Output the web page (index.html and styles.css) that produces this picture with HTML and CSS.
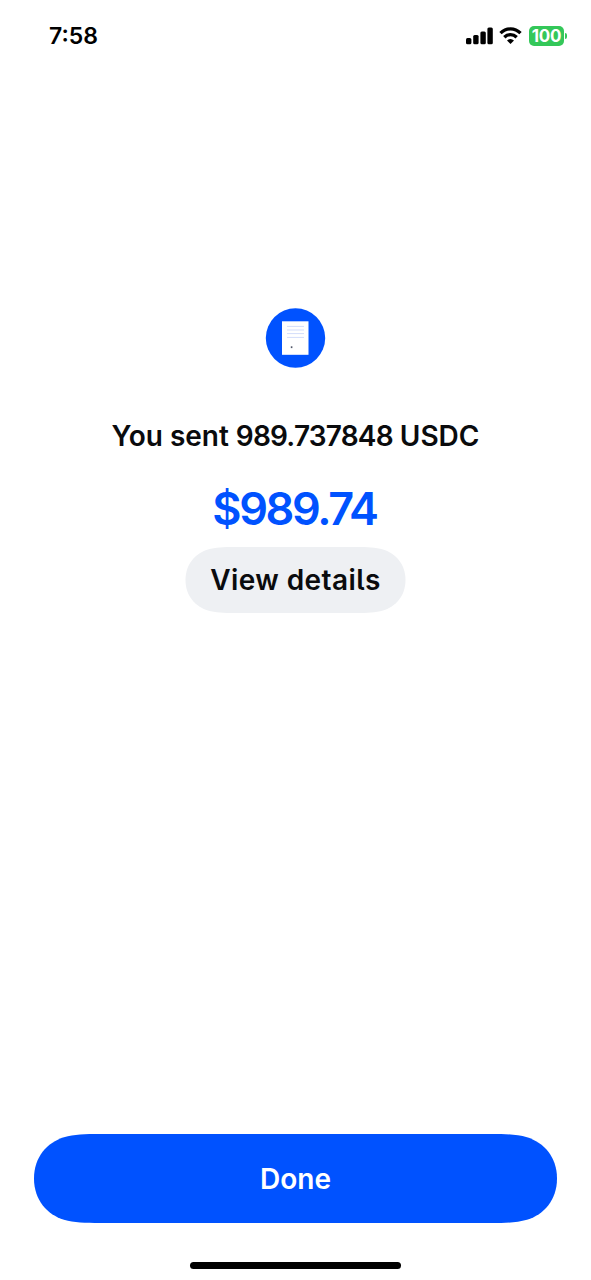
FILE: index.html
```html
<!DOCTYPE html>
<html lang="en">
<head>
<meta charset="utf-8">
<title>Transfer sent</title>
<link rel="stylesheet" href="styles.css">
</head>
<body>
<div class="screen">
  <header class="status">
    <span class="time">7:58</span>
    <div class="indicators">
      <svg class="signal" width="28" height="18" viewBox="0 0 28 18" aria-hidden="true">
        <rect x="0" y="11" width="5.4" height="6.2" rx="1.5"/>
        <rect x="7.2" y="8" width="5.4" height="9.2" rx="1.5"/>
        <rect x="14.4" y="4.6" width="5.4" height="12.6" rx="1.5"/>
        <rect x="21.4" y="0.6" width="5.4" height="16.6" rx="1.5"/>
      </svg>
      <svg class="wifi" width="24" height="18" viewBox="0 0 24 18" aria-hidden="true">
        <path class="wave" d="M1.5 6.2C7.2.4 15.8.4 21.5 6.2"/>
        <path class="wave" d="M5.3 10.3C8.9 6.8 14.1 6.8 17.7 10.3"/>
        <path d="M8 13.6Q11.5 10.5 15 13.6L11.5 17.1Z"/>
      </svg>
      <span class="battery">100</span><span class="tip"></span>
    </div>
  </header>
  <main class="receipt">
    <svg class="badge" width="61" height="60" viewBox="0 0 61 60" aria-hidden="true">
      <circle cx="30.5" cy="30" r="29.7" fill="#0052ff"/>
      <rect x="17" y="13.3" width="26.5" height="33.5" fill="#fff"/>
      <path d="M22 18.4H39M22 22H39M22 25.6H39M22 29.4H39" stroke="#d3ddfa" stroke-width="1"/>
      <rect x="25.8" y="38.3" width="1.6" height="1.8" fill="#525869"/>
    </svg>
    <h1 class="title">You sent <span class="figure">989.737848</span> USDC</h1>
    <p class="amount">$989.74</p>
    <button class="details"><svg class="shape" viewBox="0 0 220 66" aria-hidden="true"><path d="M0 33C0 17.500 9.500 6.500 22.500 2.500C30 .3 38 0 49 0H171C182 0 190 .3 197.500 2.500C210.500 6.500 220 17.500 220 33C220 48.500 210.500 59.500 197.500 63.500C190 65.700 182 66 171 66H49C38 66 30 65.700 22.500 63.500C9.500 59.500 0 48.500 0 33Z"/></svg><span class="label">View details</span></button>
  </main>
  <footer class="footer">
    <button class="done"><svg class="shape" viewBox="0 0 523 89" aria-hidden="true"><path d="M0 44.5C0 23 13 8.500 30 3.200C40 .4 51 0 66 0H457C472 0 483 .4 493 3.200C510 8.500 523 23 523 44.5C523 66 510 80.500 493 85.800C483 88.600 472 89 457 89H66C51 89 40 88.600 30 85.800C13 80.500 0 66 0 44.5Z"/></svg><span class="label">Done</span></button>
    <div class="home"></div>
  </footer>
</div>
</body>
</html>
```
FILE: styles.css
```css
* { box-sizing: border-box; }
body { margin: 0; background: #fff; }
.screen {
  width: 591px;
  height: 1280px;
  display: flex;
  flex-direction: column;
  font-family: Inter, "Liberation Sans", sans-serif;
  color: #0a0b0d;
}
.status {
  height: 72px;
  padding: 0 24px 0 49px;
  display: flex;
  align-items: center;
  justify-content: space-between;
}
.time { font-size: 23px; font-weight: 600; line-height: 28px; color: #000; }
.indicators { display: flex; align-items: center; }
.signal { margin-right: 5px; }
.wifi { margin-right: 6px; }
.wave { fill: none; stroke: #000; stroke-width: 3.3; }
.battery {
  width: 35px;
  height: 20px;
  border-radius: 5px;
  background: #34c759;
  color: #fff;
  font-size: 17px;
  font-weight: 700;
  line-height: 20px;
  letter-spacing: -0.3px;
  text-align: center;
}
.tip { width: 2px; height: 6px; margin-left: 1px; border-radius: 0 2px 2px 0; background: #34c759; }
.receipt {
  flex: 1;
  padding-top: 236px;
  display: flex;
  flex-direction: column;
  align-items: center;
}
.badge { display: block; }
.title { margin: 50px 0 0; font-size: 28px; font-weight: 600; line-height: 36px; letter-spacing: -0.03px; white-space: nowrap; }
.figure { letter-spacing: -0.8px; }
.amount { margin: 27px 0 0; font-size: 45px; font-weight: 600; line-height: 56px; letter-spacing: -2.4px; text-indent: -2px; color: #0052ff; }
.details, .done {
  border: 0;
  padding: 0;
  background: none;
  display: grid;
  place-items: center;
  font-family: inherit;
  font-size: 28px;
  font-weight: 600;
  line-height: 36px;
}
.shape, .label { grid-area: 1 / 1; }
.shape { width: 100%; height: 100%; display: block; }
.details { width: 221px; height: 66px; margin-top: 10px; color: #0a0b0d; }
.details .shape { fill: #eef0f3; }
.details .label { font-feature-settings: "cv05"; letter-spacing: 0.42px; }
.done { width: 523px; height: 89px; color: #fff; }
.done .shape { fill: #0052ff; }
.footer { height: 146px; display: flex; flex-direction: column; align-items: center; }
.home { width: 211px; height: 7px; margin-top: 38.5px; border-radius: 4px; background: #000; }
```
